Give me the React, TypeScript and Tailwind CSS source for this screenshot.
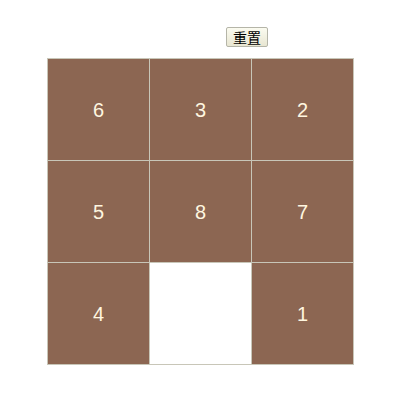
import React from "react";

const tiles = [6, 3, 2, 5, 8, 7, 4, 0, 1];

export default function App() {
  return (
    <div className="w-[408px] h-[404px] bg-white relative" style={{ fontFamily: '"Liberation Sans", Arial, sans-serif' }}>
      <div className="flex justify-start pl-[226px] pt-[27px] h-[58px]">
        <button
          className="h-[20px] w-[42px] border border-[#b5b5a8] rounded-[2px] bg-gradient-to-b from-[#fbfbf0] to-[#e8e6d2] text-[14px] leading-none text-black flex items-center justify-center"
          style={{ fontFamily: '"Noto Sans CJK SC", sans-serif' }}
        >
          重置
        </button>
      </div>
      <div className="ml-[47px] w-[307px] grid grid-cols-3 gap-px p-px bg-[#c8c6b8]">
        {tiles.map((t, i) => (
          <div
            key={i}
            className={`h-[101px] flex items-center justify-center text-[20px] ${t ? "bg-[#8c6652] text-[#fff6e0]" : "bg-white"}`}
          >
            {t ? t : ""}
          </div>
        ))}
      </div>
    </div>
  );
}
